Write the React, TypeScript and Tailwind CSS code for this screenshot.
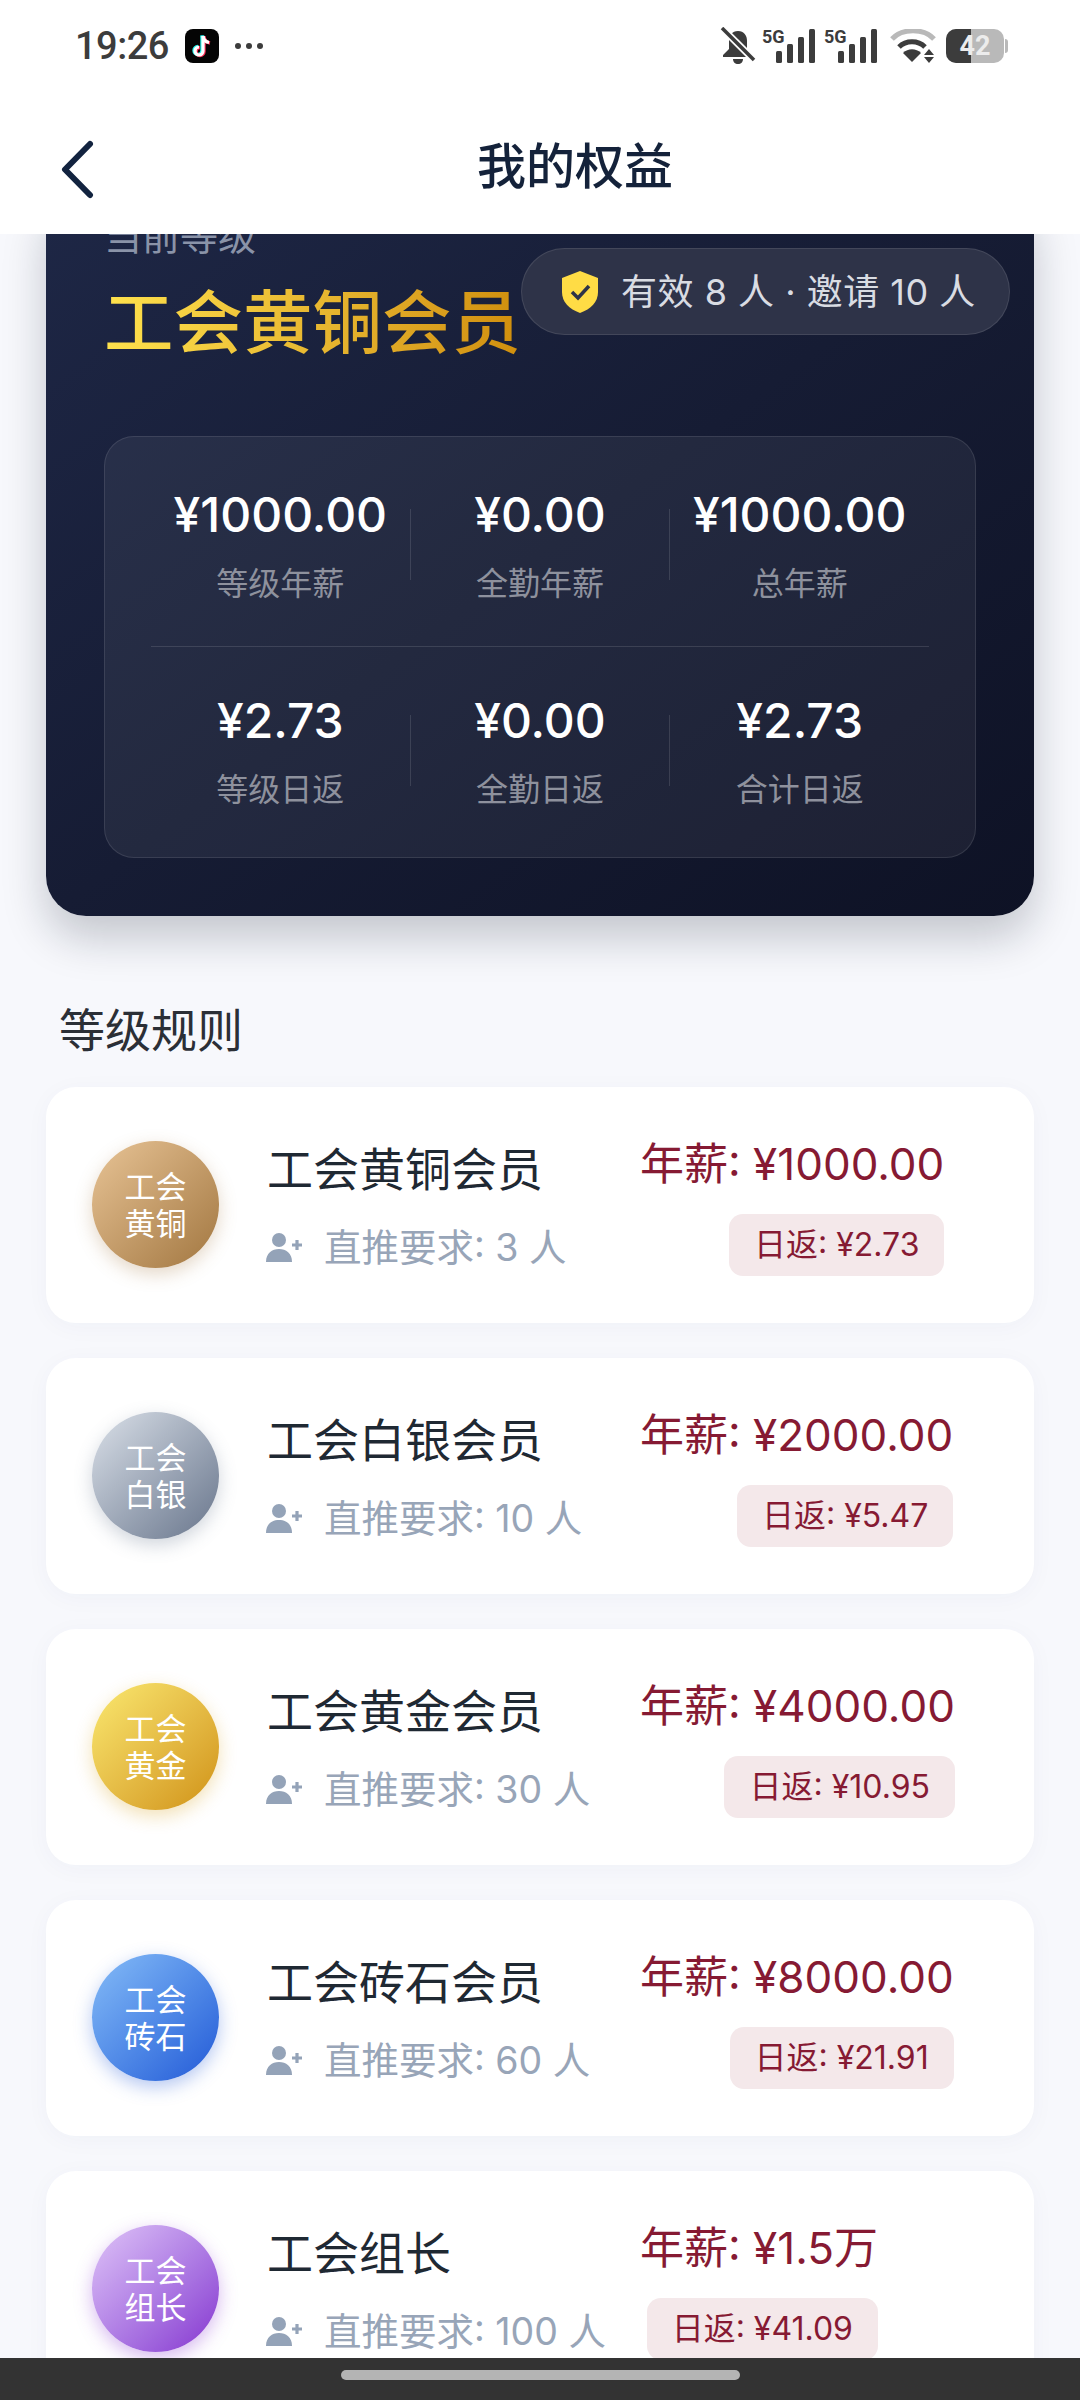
const latin = "font-['Inter','Noto_Sans_CJK_SC',sans-serif]";

const levels = [
  { name: "工会黄铜会员", a: "工会", b: "黄铜", need: "3", year: "¥1000.00", day: "¥2.73", badge: "bg-linear-to-br from-[#e8c496] to-[#a27740] shadow-[0_6px_18px_rgba(166,124,69,0.3)]" },
  { name: "工会白银会员", a: "工会", b: "白银", need: "10", year: "¥2000.00", day: "¥5.47", badge: "bg-linear-to-br from-[#dbe1e9] to-[#69768c] shadow-[0_6px_18px_rgba(100,116,139,0.3)]" },
  { name: "工会黄金会员", a: "工会", b: "黄金", need: "30", year: "¥4000.00", day: "¥10.95", badge: "bg-linear-to-br from-[#fae96f] to-[#d0920f] shadow-[0_6px_18px_rgba(212,154,18,0.3)]" },
  { name: "工会砖石会员", a: "工会", b: "砖石", need: "60", year: "¥8000.00", day: "¥21.91", badge: "bg-linear-to-br from-[#86bcf7] to-[#2458d6] shadow-[0_6px_18px_rgba(42,95,216,0.35)]" },
  { name: "工会组长", a: "工会", b: "组长", need: "100", year: "¥1.5万", day: "¥41.09", badge: "bg-linear-to-br from-[#e0c4f7] to-[#8630cf] shadow-[0_6px_18px_rgba(138,54,208,0.35)]" },
];

function Signal() {
  return (
    <svg className="overflow-visible" width="56" height="36" viewBox="0 0 56 36" fill="#3c3c3c">
      <text x="0" y="15" fontSize="18" fontWeight="700" fontFamily="Roboto, sans-serif">5G</text>
      <rect x="14" y="23" width="6" height="12" rx="1.5" />
      <rect x="25" y="16" width="6" height="19" rx="1.5" />
      <rect x="36" y="9" width="6" height="26" rx="1.5" />
      <rect x="47" y="1" width="6" height="34" rx="1.5" />
    </svg>
  );
}

function StatusBar() {
  return (
    <div className="flex h-[92px] items-center justify-between pl-[75px] pr-[72px] text-[#3c3c3c]">
      <div className="flex items-center">
        <span className="font-['Roboto',sans-serif] text-[38px] font-medium leading-none tracking-[-0.5px]">19:26</span>
        <svg className="ml-[16px]" width="34" height="34" viewBox="0 0 34 34">
          <rect width="34" height="34" rx="8" fill="#050505" />
          <path d="M18 7v15a4 4 0 1 1-4-4" fill="none" stroke="#25f4ee" strokeWidth="3.4" transform="translate(-1 -0.5)" />
          <path d="M18 7c.5 4 3 6 6 6.5" fill="none" stroke="#25f4ee" strokeWidth="3.4" transform="translate(-1 -0.5)" />
          <path d="M18 7v15a4 4 0 1 1-4-4" fill="none" stroke="#fe2c55" strokeWidth="3.4" transform="translate(1 0.5)" />
          <path d="M18 7c.5 4 3 6 6 6.5" fill="none" stroke="#fe2c55" strokeWidth="3.4" transform="translate(1 0.5)" />
          <path d="M18 7v15a4 4 0 1 1-4-4" fill="none" stroke="#fff" strokeWidth="3.2" />
          <path d="M18 7c.5 4 3 6 6 6.5" fill="none" stroke="#fff" strokeWidth="3.2" />
        </svg>
        <div className="ml-[16px] flex gap-[5px]">
          <span className="h-[6px] w-[6px] rounded-full bg-[#3c3c3c]" />
          <span className="h-[6px] w-[6px] rounded-full bg-[#3c3c3c]" />
          <span className="h-[6px] w-[6px] rounded-full bg-[#3c3c3c]" />
        </div>
      </div>
      <div className="flex items-center">
        <svg width="36" height="38" viewBox="0 0 36 38" fill="#3c3c3c">
          <path d="M18 4c-6 0-9 4.500-9 10v8l-6 6v2h30v-2l-6-6v-8c0-5.500-3-10-9-10z" />
          <path d="M13 32h10c0 3-2 5-5 5s-5-2-5-5z" />
          <path d="M2 1l32 32" stroke="#fff" strokeWidth="7" />
          <path d="M2 1l32 32" stroke="#3c3c3c" strokeWidth="3.5" />
        </svg>
        <div className="ml-[6px]"><Signal /></div>
        <div className="ml-[6px]"><Signal /></div>
        <svg className="ml-[10px]" width="46" height="34" viewBox="0 0 46 34" fill="#3c3c3c">
          <path d="M2 10C12-1 34-1 44 10" fill="none" stroke="#b9b9b9" strokeWidth="5" />
          <path d="M9 18c7-7 19-7 26 0" fill="none" stroke="#3c3c3c" strokeWidth="5" />
          <path d="M13 24c5-5 13-5 18 0l-9 9z" />
          <path d="M39 20l5 6H34zM39 34l5-6H34z" />
        </svg>
        <div className="relative ml-[10px] flex h-[34px] w-[58px] overflow-hidden rounded-[10px] bg-[#b9b9b9]">
          <div className="w-[25px] bg-[#3c3c3c]" />
          <span className="absolute inset-0 text-center font-['Roboto',sans-serif] text-[27px] font-bold leading-[34px] text-[#ececec]">42</span>
        </div>
        <div className="ml-[1px] h-[14px] w-[3px] rounded-r-full bg-[#b9b9b9]" />
      </div>
    </div>
  );
}

function Stat({ value, label }: { value: string; label: string }) {
  return (
    <div className="flex-1 text-center">
      <div className={`${latin} mt-[1px] text-[48px] font-medium leading-[60px] text-white`}>{value}</div>
      <div className="mt-[13px] font-['Noto_Sans_CJK_SC',sans-serif] text-[32px] leading-[46px] text-[#8e919d]">{label}</div>
    </div>
  );
}

function StatRow({ items }: { items: string[][] }) {
  return (
    <div className="flex items-center">
      <Stat value={items[0][0]} label={items[0][1]} />
      <div className="h-[71px] w-px bg-white/12" />
      <Stat value={items[1][0]} label={items[1][1]} />
      <div className="h-[71px] w-px bg-white/12" />
      <Stat value={items[2][0]} label={items[2][1]} />
    </div>
  );
}

function LevelCard({ item }: { item: (typeof levels)[number] }) {
  return (
    <div className="flex h-[236px] items-center rounded-[30px] bg-white pl-[46px] shadow-[0_4px_24px_rgba(40,60,120,0.035)]">
      <div className={`-mt-[1px] flex h-[127px] w-[127px] shrink-0 items-center justify-center rounded-full text-center text-[31px] leading-[37px] text-white ${item.badge}`}>
        <span>{item.a}<br />{item.b}</span>
      </div>
      <div className="ml-[48px] w-[373px] shrink-0">
        <div className="mt-[1px] text-[46px] leading-[60px] text-[#1f2933]">{item.name}</div>
        <div className="mt-[24px] flex items-center text-[37.5px] leading-[50px] text-[#98a5b8]">
          <svg className="-ml-[2px]" width="38" height="30" viewBox="0 0 38 30" fill="#94a3b8">
            <circle cx="14" cy="7" r="7" />
            <path d="M1 29c0-9 6-13 13-13s13 4 13 13z" />
            <path d="M32 7v10M27 12h10" stroke="#94a3b8" strokeWidth="3.2" fill="none" />
          </svg>
          <span className="ml-[21px] whitespace-nowrap">直推要求: {item.need} 人</span>
        </div>
      </div>
      <div className="flex flex-col items-end">
        <div className="mt-[2px] whitespace-nowrap text-[44px] leading-[56px] text-[#861a33]">年薪: {item.year}</div>
        <div className="mt-[22px] flex h-[62px] items-center whitespace-nowrap rounded-[14px] bg-[#f4e8ea] px-[25px] text-[32px] text-[#861a33]">日返: {item.day}</div>
      </div>
    </div>
  );
}

export default function App() {
  return (
    <div className={`${latin} relative flex h-[2400px] w-[1080px] flex-col overflow-hidden bg-[#f7f8fc]`}>
      {/* header */}
      <header className="relative z-10 h-[234px] shrink-0 bg-white">
        <StatusBar />
        <div className="relative flex h-[142px] items-center justify-center pl-[70px] pt-[8px]">
          <svg className="absolute left-[60px] top-[47px]" width="36" height="60" viewBox="0 0 36 60" fill="none">
            <path d="M30 5 5 30.500 30 56" stroke="#12233f" strokeWidth="6" strokeLinecap="round" strokeLinejoin="round" />
          </svg>
          <h1 className="text-[49px] font-medium text-[#14223a]">我的权益</h1>
        </div>
      </header>

      <main className="flex-1 overflow-hidden px-[46px]">
        {/* current level */}
        <section className="-mt-[45px] h-[727px] rounded-[40px] bg-linear-to-br from-[#1e2746] via-[#161c34] to-[#0e1225] pl-[58px] pr-[24px] pt-[22px] shadow-[0_22px_44px_rgba(15,23,42,0.22)]">
          <div className="flex items-start justify-between">
            <div>
              <div className="text-[38px] leading-[50px] text-[#8a93a8]">当前等级</div>
              <div className="mt-[17px] whitespace-nowrap bg-linear-to-r from-[#ffe24d] to-[#d08f0c] bg-clip-text text-[69.5px] font-medium leading-[90px] text-transparent">工会黄铜会员</div>
            </div>
            <div className="mt-[37px] flex h-[87px] w-[489px] shrink-0 items-center rounded-full border border-white/10 bg-[#2e3348] pl-[39px]">
              <svg width="38" height="42" viewBox="0 0 38 42">
                <path d="M19 0l18 7v14c0 10-7 17-18 21C8 38 1 31 1 21V7z" fill="#ffdc45" />
                <path d="M11 21l6 6 11-12" fill="none" stroke="#2e3348" strokeWidth="3.5" />
              </svg>
              <span className="ml-[22px] whitespace-nowrap text-[36px] tracking-[0.5px] text-[#d9dce3]">有效 8 人 · 邀请 10 人</span>
            </div>
          </div>

          <div className="mt-[68px] h-[422px] w-[872px] rounded-[30px] border border-white/10 bg-white/6 px-[46px] pt-[47px]">
            <StatRow items={[["¥1000.00", "等级年薪"], ["¥0.00", "全勤年薪"], ["¥1000.00", "总年薪"]]} />
            <div className="mb-[43px] mt-[42px] h-px bg-white/12" />
            <StatRow items={[["¥2.73", "等级日返"], ["¥0.00", "全勤日返"], ["¥2.73", "合计日返"]]} />
          </div>
        </section>

        <h2 className="mb-[27px] ml-[13px] mt-[84px] text-[46px] leading-[60px] text-[#2b2f36]">等级规则</h2>

        <div className="flex flex-col gap-[35px]">
          {levels.map((item) => (
            <LevelCard key={item.name} item={item} />
          ))}
        </div>
      </main>

      {/* system nav bar */}
      <div className="absolute bottom-0 left-0 right-0 z-20 flex h-[42px] justify-center bg-[#333333] pt-[12px]">
        <div className="h-[10px] w-[399px] rounded-full bg-[#b4b4b4]" />
      </div>
    </div>
  );
}
